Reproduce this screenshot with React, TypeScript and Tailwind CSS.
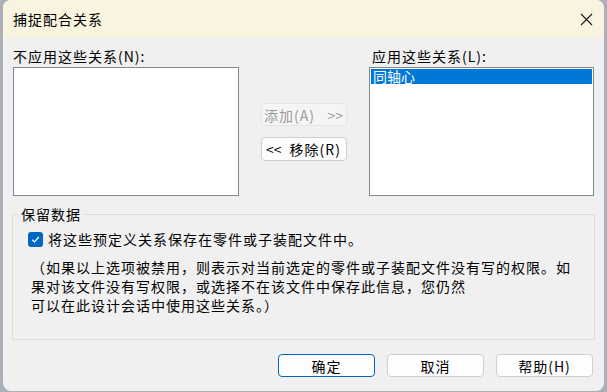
const font = { fontFamily: '"Noto Sans CJK SC", "Microsoft YaHei", sans-serif' };

function ListBox({ items, selected }: { items: string[]; selected?: number }) {
  return (
    <div className="h-[129px] border border-[#828790] bg-white p-px">
      {items.map((item, i) => (
        <div
          key={item}
          className={
            i === selected
              ? "h-[15px] bg-[#0078d7] pl-[2px] text-[14px] leading-[15px] text-white"
              : "h-[15px] pl-[2px] text-[14px] leading-[15px]"
          }
        >
          {item}
        </div>
      ))}
    </div>
  );
}

function DialogButton({ label, primary }: { label: string; primary?: boolean }) {
  return (
    <button
      className={
        "h-[23px] w-[97px] rounded-[4px] border bg-[#fdfdfd] text-[14px] leading-none tracking-[1px] text-black " +
        (primary ? "border-[#0067c0]" : "border-[#d0d0d0]")
      }
    >
      {label}
    </button>
  );
}

export default function App() {
  return (
    <div className="h-[392px] w-[607px] overflow-hidden bg-[#aab0b8] pl-[3px]" style={font}>
      <div className="flex h-[391px] w-[601px] flex-col overflow-hidden rounded-[8px] bg-[#f0f0f0] text-black">
        {/* title bar */}
        <div className="flex h-[38px] shrink-0 items-center justify-between bg-[#f9f4df] pl-[10px] pr-[11px]">
          <span className="text-[14px] tracking-[1px]">捕捉配合关系</span>
          <svg width="13" height="13" viewBox="0 0 13 13" aria-hidden="true">
            <path d="M1 1 L12 12 M12 1 L1 12" stroke="#1a1a1a" strokeWidth="1.1" />
          </svg>
        </div>

        {/* lists */}
        <div className="mt-[10px] flex pl-[10px]">
          <div className="w-[226px]">
            <div className="h-[19px] text-[14px] leading-[17px] tracking-[1px]">不应用这些关系(N):</div>
            <ListBox items={[]} />
          </div>

          <div className="ml-[22px] flex w-[86px] flex-col gap-[11px] pt-[55px]">
            <button className="flex h-[23px] items-center justify-between rounded-[4px] border border-[#e5e5e5] bg-[#f5f5f5] px-[2px] text-[14px] leading-none text-[#9a9a9a]">
              <span className="tracking-[1px]">添加(A)</span>
              <span className="pr-[1px]">&gt;&gt;</span>
            </button>
            <button className="flex h-[24px] items-center gap-[8px] rounded-[4px] border border-[#d0d0d0] bg-[#fdfdfd] px-[4px] text-[14px] leading-none">
              <span>&lt;&lt;</span>
              <span className="tracking-[1px]">移除(R)</span>
            </button>
          </div>

          <div className="ml-[22px] w-[225px]">
            <div className="h-[19px] pl-[3px] text-[14px] leading-[17px] tracking-[1px]">应用这些关系(L):</div>
            <ListBox items={["同轴心"]} selected={0} />
          </div>
        </div>

        {/* keep data group */}
        <fieldset className="mx-[9px] mt-[10px] h-[134px] border border-[#dcdcdc]">
          <legend className="ml-[6px] px-[2px] text-[14px] leading-[17px] tracking-[1px]">保留数据</legend>
          <div className="pl-[15px]">
            <label className="mt-[8px] flex items-center gap-[5px]">
              <span className="flex h-[15px] w-[15px] items-center justify-center rounded-[3px] bg-[#0067c0]">
                <svg width="9" height="9" viewBox="0 0 9 9" aria-hidden="true">
                  <path d="M1.2 4.8 L3.5 7 L7.8 2" fill="none" stroke="white" strokeWidth="1.2" />
                </svg>
              </span>
              <span className="text-[14px] leading-[17px] tracking-[1px]">将这些预定义关系保存在零件或子装配文件中。</span>
            </label>
            <div className="mt-[10px] pl-[3px] text-[14px] leading-[19px] tracking-[1px]">
              <div>（如果以上选项被禁用，则表示对当前选定的零件或子装配文件没有写的权限。如</div>
              <div>果对该文件没有写权限，或选择不在该文件中保存此信息，您仍然</div>
              <div>可以在此设计会话中使用这些关系。）</div>
            </div>
          </div>
        </fieldset>

        {/* footer buttons */}
        <div className="mt-[14px] flex justify-end gap-[12px] pr-[11px]">
          <DialogButton label="确定" primary />
          <DialogButton label="取消" />
          <DialogButton label="帮助(H)" />
        </div>
      </div>
    </div>
  );
}
